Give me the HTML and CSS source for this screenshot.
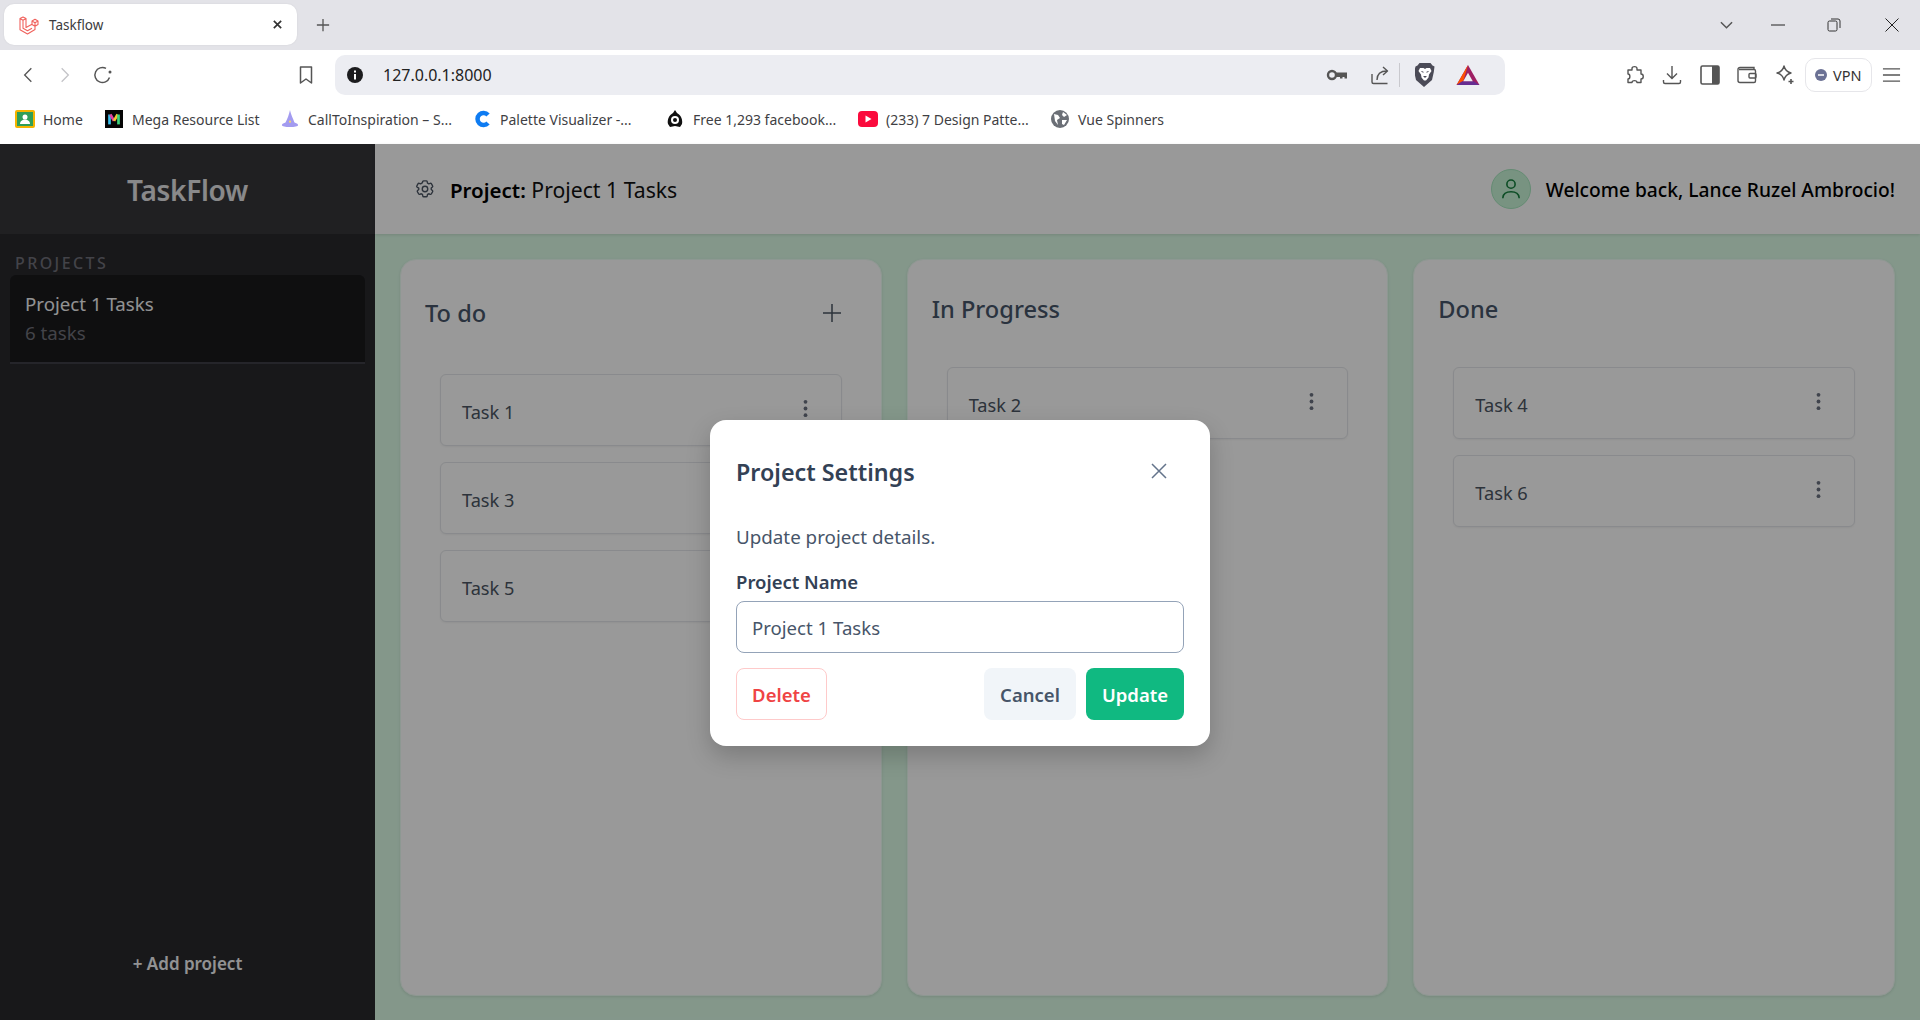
FILE: index.html
```html
<!DOCTYPE html>
<html lang="en">
<head>
<meta charset="utf-8">
<title>Taskflow</title>
<link rel="stylesheet" href="styles.css">
</head>
<body>
<div class="chrome">
  <div class="tabstrip">
    <div class="tab">
      <svg class="fav" viewBox="0 0 20 20" fill="none" stroke="#f0625d" stroke-width="1.1" stroke-linejoin="round"><path d="M1 3.500 4 2l3 1.500v9l6-3.200V6l3-1.700 3 1.700v3.500l-3 1.700v3.300L8.500 19 1 14.800zM1 3.500l3 1.700 3-1.700M4 5.200v8l4.500 2.500 4.500-2.500M13 6l3 1.700 3-1.700M16 7.700v3.500M13 9.500l3 1.700"/></svg>
      <span class="tab-title">Taskflow</span>
      <svg class="tab-x" viewBox="0 0 12 12" stroke="#333" stroke-width="1.800" fill="none"><path d="M2 2l8 8M10 2l-8 8"/></svg>
    </div>
    <svg class="tab-plus" viewBox="0 0 16 16" stroke="#555" stroke-width="1.500" fill="none"><path d="M8 1v14M1 8h14"/></svg>
    <div class="grow"></div>
    <svg class="win-chev" viewBox="0 0 14 8" stroke="#555" stroke-width="1.600" fill="none"><path d="M1 1l6 6 6-6"/></svg>
    <svg class="win-min" viewBox="0 0 14 14" stroke="#222" stroke-width="1" fill="none"><path d="M0 7h14"/></svg>
    <svg class="win-max" viewBox="0 0 14 14" stroke="#333" stroke-width="1" fill="none"><rect x="1" y="3" width="9" height="10" rx="1.500"/><path d="M4 1h7a2 2 0 0 1 2 2v7"/></svg>
    <svg class="win-close" viewBox="0 0 14 14" stroke="#222" stroke-width="1" fill="none"><path d="M0.500 0.500l13 13M13.500 0.500l-13 13"/></svg>
  </div>
  <div class="toolbar">
    <svg class="nav-back" viewBox="0 0 12 20" stroke="#555" stroke-width="1.600" fill="none"><path d="M10 2 2 10l8 8"/></svg>
    <svg class="nav-fwd" viewBox="0 0 12 20" stroke="#c4c4c8" stroke-width="1.600" fill="none"><path d="M2 2l8 8-8 8"/></svg>
    <svg class="nav-reload" viewBox="0 0 20 20" stroke="#555" stroke-width="1.500" fill="none"><path d="M16.500 12.500A7.500 7.500 0 1 1 13 3.400"/><circle cx="17" cy="7" r="1.500" fill="#555" stroke="none"/></svg>
    <svg class="nav-mark" viewBox="0 0 14 18" stroke="#555" stroke-width="1.500" fill="none" stroke-linejoin="round"><path d="M1.500 1h11v16L7 13l-5.500 4z"/></svg>
    <div class="omnibox">
      <svg class="info" viewBox="0 0 16 16"><circle cx="8" cy="8" r="8" fill="#1c1c1e"/><path d="M7 7h2v5.500H7zM7 3.500h2v2H7z" fill="#fff"/></svg>
      <span class="url">127.0.0.1:8000</span>
      <div class="grow"></div>
      <svg class="omni-key" viewBox="0 0 22 14" fill="none"><circle cx="6" cy="7" r="4" stroke="#555" stroke-width="2.400"/><path d="M10 4.500h11v6h-2.500V9h-2v1.500H14V9h-4z" fill="#555"/></svg>
      <svg class="omni-share" viewBox="0 0 20 20" stroke="#555" stroke-width="1.400" fill="none" stroke-linejoin="round"><path d="M7 15c0-6 3-9 10-9M13 2l4.500 4-4.500 4M2 9v8a1.500 1.500 0 0 0 1.500 1.500h14"/></svg>
      <span class="omni-sep"></span>
      <svg class="omni-lion" viewBox="0 0 20 24"><path d="M4.500 0h11l2 2.500 2 1-.7 5.500-1.800 8-8 7-8-7-1.800-8L.5 3.500l2-1z" fill="#4b4b57"/><path d="M5 5h3.500l1.500 1 1.500-1H15l1.500 3-2.500 3.500-.5 3L11 17.500H9l-2.500-3-.5-3L3.500 8z" fill="#fff"/><path d="M8 13h4l-2 2z" fill="#4b4b57"/><path d="M6.500 8.500l2 .7M13.500 8.500l-2 .7" stroke="#4b4b57" stroke-width="1"/></svg>
      <svg class="omni-bat" viewBox="0 0 24 22"><polygon points="12,0 24,21 0,21" fill="#9e1f63"/><polygon points="12,0 0,21 7,17" fill="#ff5000"/><polygon points="0,21 24,21 18,17 6,17" fill="#662d91"/><polygon points="12,8 17,17 7,17" fill="#eceef2"/></svg>
    </div>
    <svg class="tool-puzzle" viewBox="0 0 20 20" stroke="#555" stroke-width="1.400" fill="none" stroke-linejoin="round"><path d="M7 3.500C7 1 12 1 12 3.500V5h4v4c3 0 3 5 0 5v3.500h-4c0-2.500-5-2.500-5 0H3V14c2.500 0 2.500-5 0-5V5h4z"/></svg>
    <svg class="tool-down" viewBox="0 0 20 20" stroke="#555" stroke-width="1.400" fill="none"><path d="M10 1v12M5 8.500l5 5 5-5M1.500 15v2a1.500 1.500 0 0 0 1.500 1.500h14a1.500 1.500 0 0 0 1.500-1.500v-2"/></svg>
    <svg class="tool-side" viewBox="0 0 20 20"><rect x="1" y="1" width="18" height="18" rx="1.500" fill="none" stroke="#555" stroke-width="1.600"/><rect x="12" y="1" width="7" height="18" fill="#555"/></svg>
    <svg class="tool-wallet" viewBox="0 0 20 20" stroke="#555" stroke-width="1.400" fill="none"><path d="M17 4V2.500H3A2 2 0 0 0 1 4.500v11A2 2 0 0 0 3 17.500h14A1.500 1.500 0 0 0 18.500 16V6A1.500 1.500 0 0 0 17 4.500H2"/><rect x="12" y="8.500" width="7" height="4.500" rx="1"/></svg>
    <svg class="tool-star" viewBox="0 0 20 20" stroke="#555" stroke-width="1.400" fill="none" stroke-linejoin="round"><path d="M9 1c1 4 3 6 7 7-4 1-6 3-7 7-1-4-3-6-7-7 4-1 6-3 7-7z"/><path d="M16 14v5M13.500 16.500h5" stroke-width="1.600"/></svg>
    <div class="vpn">
      <svg class="vpn-dot" viewBox="0 0 12 12"><circle cx="6" cy="6" r="6" fill="#6b7194"/><path d="M3 6h6" stroke="#fff" stroke-width="1.500"/></svg>
      <span>VPN</span>
    </div>
    <svg class="tool-menu" viewBox="0 0 20 16" stroke="#555" stroke-width="1.400" fill="none"><path d="M1 1.500h18M1 8h18M1 14.500h18"/></svg>
  </div>
  <div class="bookmarks">
    <div class="bm bm-home">
      <svg class="bm-ic" viewBox="0 0 20 18"><rect width="20" height="18" rx="2" fill="#f4b400"/><rect x="2" y="2" width="16" height="14" fill="#2f9e58"/><circle cx="10" cy="7" r="2.500" fill="#fff"/><path d="M5 14c0-6 10-6 10 0z" fill="#fff"/></svg>
      <span>Home</span>
    </div>
    <div class="bm bm-mega">
      <svg class="bm-ic" viewBox="0 0 20 20"><rect width="20" height="20" fill="#050505"/><path d="M5 16V5" stroke="#39c0ed" stroke-width="3"/><path d="M6 5l4 7" stroke="#e23fa0" stroke-width="3"/><path d="M14 5l-4 7" stroke="#f4c430" stroke-width="3"/><path d="M15 16V5" stroke="#3ed67c" stroke-width="3"/></svg>
      <span>Mega Resource List</span>
    </div>
    <div class="bm bm-wiz">
      <svg class="bm-ic" viewBox="0 0 20 20"><path d="M10 0c1 5 4 11 5 14 3 1 4 2 4 3s-4 2-9 2-9-1-9-2 1-2 4-3c2-4 4-9 5-14z" fill="#a39bf0"/><circle cx="10" cy="13" r="1.200" fill="#f5d76e"/></svg>
      <span>CallToInspiration – S...</span>
    </div>
    <div class="bm bm-pal">
      <svg class="bm-ic-p" viewBox="0 0 16 18" fill="none"><path d="M13 5A6 6 0 1 0 13 13" stroke="#0f7cf2" stroke-width="4.500"/></svg>
      <span>Palette Visualizer -...</span>
    </div>
    <div class="bm bm-free">
      <svg class="bm-ic-s" viewBox="0 0 16 18"><path d="M8 0l2 3c4 2 6 7 5 11l-2 3-5-1-5 1-2-3C0 10 2 5 6 3z" fill="#111"/><circle cx="8" cy="10" r="4" fill="#fff"/><circle cx="8" cy="10" r="2" fill="#111"/></svg>
      <span>Free 1,293 facebook...</span>
    </div>
    <div class="bm bm-yt">
      <svg class="bm-ic" viewBox="0 0 20 16"><rect width="20" height="16" rx="4" fill="#fb0b3d"/><path d="M7.500 4.500l6 3.500-6 3.500z" fill="#fff"/></svg>
      <span>(233) 7 Design Patte...</span>
    </div>
    <div class="bm bm-vue">
      <svg class="bm-ic-g" viewBox="0 0 18 18"><circle cx="9" cy="9" r="9" fill="#6b6f76"/><path d="M3 4l4 1 2 3-3 2 1 5-3-4zM12 2l4 3-3 2-2-2zM11 10l5 0-3 5-2-1z" fill="#fff"/></svg>
      <span>Vue Spinners</span>
    </div>
  </div>
</div>

<div class="app">
  <aside class="sidebar">
    <div class="brand">TaskFlow</div>
    <div class="side-body">
      <div class="side-label">PROJECTS</div>
      <div class="side-item">
        <div class="side-name">Project 1 Tasks</div>
        <div class="side-count">6 tasks</div>
      </div>
    </div>
    <div class="side-add">+ Add project</div>
  </aside>
  <main class="main">
    <header class="topbar">
      <svg class="gear" viewBox="0 0 24 24" fill="none" stroke="#4b5563" stroke-width="1.500" stroke-linejoin="round"><path d="M9.600 3.900a1 1 0 0 1 1-.8h2.800a1 1 0 0 1 1 .8l.3 1.700c.5.200 1 .5 1.400.8l1.600-.6a1 1 0 0 1 1.200.4l1.400 2.400a1 1 0 0 1-.2 1.300l-1.300 1.100a7 7 0 0 1 0 1.600l1.300 1.100a1 1 0 0 1 .2 1.300l-1.400 2.400a1 1 0 0 1-1.200.4l-1.600-.6c-.4.300-.9.600-1.400.8l-.3 1.700a1 1 0 0 1-1 .8h-2.800a1 1 0 0 1-1-.8l-.3-1.700a7 7 0 0 1-1.400-.8l-1.600.6a1 1 0 0 1-1.200-.4l-1.400-2.400a1 1 0 0 1 .2-1.300l1.300-1.100a7 7 0 0 1 0-1.600L3.300 9.900a1 1 0 0 1-.2-1.300l1.400-2.400a1 1 0 0 1 1.200-.4l1.600.6c.4-.3.900-.6 1.400-.8z"/><circle cx="12" cy="12" r="3"/></svg>
      <div class="crumb"><strong>Project:</strong> Project 1 Tasks</div>
      <div class="grow"></div>
      <div class="avatar">
        <svg viewBox="0 0 24 24" fill="none" stroke="#15803d" stroke-width="1.500" stroke-linecap="round"><circle cx="12" cy="7.500" r="3.800"/><path d="M4.500 20c.3-4 3.500-5.500 7.500-5.500s7.200 1.500 7.500 5.500"/></svg>
      </div>
      <div class="welcome">Welcome back, Lance Ruzel Ambrocio!</div>
    </header>
    <div class="board">
      <section class="column">
        <div class="col-head col-head-btn">
          <h2>To do</h2>
          <svg class="col-plus" viewBox="0 0 20 20" stroke="#4b5563" stroke-width="1.500" fill="none"><path d="M10 1v18M1 10h18"/></svg>
        </div>
        <div class="tasks">
          <div class="task"><span>Task 1</span><svg class="kebab" viewBox="0 0 4 20" fill="#6b7280"><circle cx="2" cy="3" r="2"/><circle cx="2" cy="10" r="2"/><circle cx="2" cy="17" r="2"/></svg></div>
          <div class="task"><span>Task 3</span><svg class="kebab" viewBox="0 0 4 20" fill="#6b7280"><circle cx="2" cy="3" r="2"/><circle cx="2" cy="10" r="2"/><circle cx="2" cy="17" r="2"/></svg></div>
          <div class="task"><span>Task 5</span><svg class="kebab" viewBox="0 0 4 20" fill="#6b7280"><circle cx="2" cy="3" r="2"/><circle cx="2" cy="10" r="2"/><circle cx="2" cy="17" r="2"/></svg></div>
        </div>
      </section>
      <section class="column">
        <div class="col-head"><h2>In Progress</h2></div>
        <div class="tasks">
          <div class="task"><span>Task 2</span><svg class="kebab" viewBox="0 0 4 20" fill="#6b7280"><circle cx="2" cy="3" r="2"/><circle cx="2" cy="10" r="2"/><circle cx="2" cy="17" r="2"/></svg></div>
        </div>
      </section>
      <section class="column">
        <div class="col-head"><h2>Done</h2></div>
        <div class="tasks">
          <div class="task"><span>Task 4</span><svg class="kebab" viewBox="0 0 4 20" fill="#6b7280"><circle cx="2" cy="3" r="2"/><circle cx="2" cy="10" r="2"/><circle cx="2" cy="17" r="2"/></svg></div>
          <div class="task"><span>Task 6</span><svg class="kebab" viewBox="0 0 4 20" fill="#6b7280"><circle cx="2" cy="3" r="2"/><circle cx="2" cy="10" r="2"/><circle cx="2" cy="17" r="2"/></svg></div>
        </div>
      </section>
    </div>
  </main>
  <div class="overlay">
    <div class="modal">
      <div class="modal-head">
        <h3>Project Settings</h3>
        <svg class="modal-x" viewBox="0 0 16 16" stroke="#64748b" stroke-width="1.500" fill="none"><path d="M1 1l14 14M15 1 1 15"/></svg>
      </div>
      <p class="modal-desc">Update project details.</p>
      <label class="modal-label" for="pname">Project Name</label>
      <input class="modal-input" id="pname" type="text" value="Project 1 Tasks">
      <div class="modal-actions">
        <button class="btn btn-delete" type="button">Delete</button>
        <div class="grow"></div>
        <button class="btn btn-cancel" type="button">Cancel</button>
        <button class="btn btn-update" type="button">Update</button>
      </div>
    </div>
  </div>
</div>
</body>
</html>
```
FILE: styles.css
```css
* { box-sizing: border-box; }
html, body { margin: 0; height: 100%; overflow: hidden; }
body { font-family: "Noto Sans", "Open Sans", sans-serif; display: flex; flex-direction: column; height: 1020px; background: #fff; }
svg { display: block; flex: none; }
.grow { flex: 1; }

/* browser chrome */
.chrome { flex: none; height: 144px; background: #fff; }
.tabstrip { height: 50px; background: #e3e3e8; display: flex; align-items: center; padding: 0 21px 0 4px; }
.tab { width: 293px; height: 41px; background: #fff; border-radius: 10px; display: flex; align-items: center; padding: 0 15px; margin-top: -1px; box-shadow: 0 0 2px rgba(0,0,0,.08); }
.fav { width: 20px; height: 20px; }
.tab-title { font-size: 13.5px; color: #3c3c40; margin-left: 10px; flex: 1; }
.tab-x { width: 11px; height: 11px; margin-right: -1px; }
.tab-plus { width: 14px; height: 14px; margin-left: 19px; }
.win-chev { width: 13px; height: 8px; }
.win-min { width: 14px; height: 14px; margin-left: 38px; }
.win-max { width: 14px; height: 14px; margin-left: 42px; }
.win-close { width: 14px; height: 14px; margin-left: 44px; }

.toolbar { height: 45px; display: flex; align-items: center; padding: 5px 18px 0 23px; }
.nav-back { width: 10px; height: 18px; }
.nav-fwd { width: 10px; height: 18px; margin-left: 27px; }
.nav-reload { width: 20px; height: 20px; margin-left: 23px; }
.nav-mark { width: 14px; height: 18px; margin-left: 186px; }
.omnibox { width: 1170px; height: 40px; margin-left: 22px; background: #ecedf2; border-radius: 10px; display: flex; align-items: center; padding: 0 25px 0 12px; }
.info { width: 16px; height: 16px; }
.url { font-size: 16px; color: #222; margin-left: 20px; }
.omni-key { width: 22px; height: 14px; }
.omni-share { width: 20px; height: 20px; margin-left: 22px; }
.omni-sep { width: 1px; height: 24px; background: #c9c9ce; margin-left: 9px; }
.omni-lion { width: 20px; height: 24px; margin-left: 15px; }
.omni-bat { width: 24px; height: 21px; margin-left: 21px; }
.tool-puzzle { width: 20px; height: 20px; margin-left: 120px; }
.tool-down { width: 20px; height: 20px; margin-left: 17px; }
.tool-side { width: 20px; height: 20px; margin-left: 18px; }
.tool-wallet { width: 20px; height: 20px; margin-left: 17px; }
.tool-star { width: 20px; height: 20px; margin-left: 18px; }
.vpn { width: 67px; height: 34px; margin-left: 10px; border: 1px solid #e6e6ea; border-radius: 10px; display: flex; align-items: center; padding-left: 9px; font-size: 14.5px; color: #333; gap: 6px; }
.vpn-dot { width: 12px; height: 12px; }
.tool-menu { width: 19px; height: 16px; margin-left: 10px; }

.bookmarks { height: 48px; display: flex; align-items: center; font-size: 14px; color: #3f3f44; padding-left: 15px; }
.bm { display: flex; align-items: center; white-space: nowrap; }
.bm-ic { width: 20px; height: 18px; margin-right: 8px; }
.bm-ic-s { width: 16px; height: 18px; margin-right: 10px; }
.bm-ic-p { width: 16px; height: 18px; margin-right: 9px; }
.bm-ic-g { width: 18px; height: 18px; margin-right: 9px; }
.bm-home { width: 89px; }
.bm-mega { width: 176px; }
.bm-wiz { width: 195px; }
.bm-pal { width: 192px; }
.bm-free { width: 191px; }
.bm-yt { width: 193px; }

/* app */
.app { position: relative; flex: 1; display: flex; min-height: 0; }
.sidebar { width: 375px; flex: none; background: #28282c; display: flex; flex-direction: column; }
.brand { height: 90px; padding-top: 1px; background: #36363a; display: flex; align-items: center; justify-content: center; font-size: 28px; font-weight: 600; color: #e4e4e7; letter-spacing: -.3px; }
.side-body { flex: 1; padding: 18px 10px 0; }
.side-label { font-size: 16px; font-weight: 500; color: #71717a; letter-spacing: 2.4px; padding-left: 5px; line-height: 22px; }
.side-item { height: 89px; margin-top: 1px; background: #19191c; border-bottom: 2px solid #3f3f46; border-radius: 6px 6px 0 0; padding: 15px 15px 0; }
.side-name { font-size: 18.700px; line-height: 27px; color: #f4f4f5; }
.side-count { font-size: 18.700px; line-height: 32px; color: #71717a; }
.side-add { height: 112px; display: flex; justify-content: center; padding-top: 44px; font-size: 17px; font-weight: 600; color: #f4f4f5; }

.main { flex: 1; min-width: 0; display: flex; flex-direction: column; background: #dcfce7; }
.topbar { height: 90px; flex: none; background: #fff; display: flex; align-items: center; padding: 0 25px 0 39px; box-shadow: 0 1px 3px rgba(0,0,0,.12); position: relative; }
.gear { width: 22px; height: 22px; }
.crumb { margin-left: 14px; font-size: 21.200px; color: #111; }
.crumb strong { font-weight: 600; color: #000; font-size: 20.500px; }
.avatar { width: 40px; height: 40px; border-radius: 50%; background: #c8f5d8; border: 1px solid #a7e8bf; display: flex; align-items: center; justify-content: center; }
.avatar svg { width: 26px; height: 26px; }
.welcome { margin-left: 15px; font-size: 19.200px; font-weight: 500; color: #000; }

.board { flex: 1; display: flex; gap: 25px; padding: 25px 25px 24px; min-height: 0; }
.column { flex: 1; min-width: 0; background: #fff; border: 1px solid #ecfdf3; border-radius: 16px; padding: 24px; box-shadow: 0 1px 3px rgba(0,0,0,.1); }
.col-head { min-height: 50px; display: flex; align-items: center; justify-content: space-between; margin-bottom: 33px; }
.col-head-btn { min-height: 57px; }
.col-head h2 { margin: 0; font-size: 23.600px; font-weight: 500; color: #475569; }
.col-plus { width: 20px; height: 20px; margin-right: 15px; }
.tasks { display: flex; flex-direction: column; gap: 16px; padding: 0 15px; }
.task { height: 72px; border: 1px solid #e5e7eb; border-radius: 6px; background: #fff; display: flex; align-items: center; justify-content: space-between; padding: 0 33px 0 21px; font-size: 18.200px; color: #4b5563; box-shadow: 0 1px 2px rgba(0,0,0,.05); }
.task span { padding-top: 3px; }
.kebab { width: 5px; height: 19px; margin-top: -3px; }

/* modal */
.overlay { position: absolute; inset: 0; padding-top: 2px; background: rgba(0,0,0,.4); display: flex; align-items: center; justify-content: center; }
.modal { width: 500px; height: 326px; background: #fff; border-radius: 16px; padding: 25px 26px 26px; box-shadow: 0 10px 25px rgba(0,0,0,.2); color: #334155; }
.modal-head { display: flex; align-items: center; justify-content: space-between; height: 54px; }
.modal-head h3 { margin: 0; font-size: 23.300px; font-weight: 600; color: #334155; }
.modal-x { width: 16px; height: 16px; margin-right: 17px; margin-top: -2px; }
.modal-desc { margin: 25px 0 0; font-size: 18.800px; line-height: 26px; color: #475569; }
.modal-label { display: block; margin-top: 18px; font-size: 18.500px; font-weight: 600; line-height: 28px; color: #334155; }
.modal-input { display: block; width: 100%; height: 52px; margin-top: 5px; padding: 0 15px; border: 1px solid #94a3b8; border-radius: 8px; font: 18.600px "Noto Sans", sans-serif; color: #475569; background: #fff; outline: none; }
.modal-actions { display: flex; gap: 10px; margin-top: 15px; }
.btn { height: 52px; border-radius: 8px; font: 600 18.500px "Noto Sans", sans-serif; padding: 0; border: 0; }
.btn-delete { width: 91px; background: #fff; border: 1px solid #fecaca; color: #ef4444; }
.btn-cancel { width: 92px; background: #f1f5f9; color: #475569; }
.btn-update { width: 98px; background: #10b981; color: #fff; }
```
